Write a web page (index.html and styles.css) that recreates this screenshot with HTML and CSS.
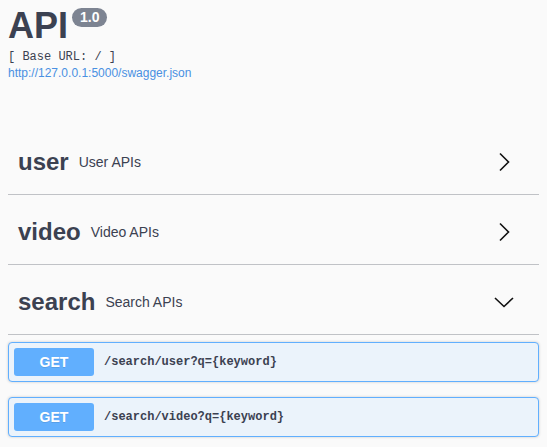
FILE: index.html
```html
<!DOCTYPE html>
<html>
<head>
<meta charset="utf-8">
<link rel="stylesheet" href="styles.css">
</head>
<body>
<div class="wrap">
  <div class="info">
    <h2 class="title">API <span class="version">1.0</span></h2>
    <div class="base-url">[ Base URL: / ]</div>
    <a class="spec-link" href="#">http://127.0.0.1:5000/swagger.json</a>
  </div>

  <div class="tags">
    <div class="tag">
      <span class="tag-name">user</span>
      <span class="tag-desc">User APIs</span>
      <svg class="chev" width="20" height="20" viewBox="0 0 20 20"><polyline points="6,1.5 14.5,10 6,18.5" fill="none" stroke="#111" stroke-width="1.6"/></svg>
    </div>
    <div class="tag">
      <span class="tag-name">video</span>
      <span class="tag-desc">Video APIs</span>
      <svg class="chev" width="20" height="20" viewBox="0 0 20 20"><polyline points="6,1.5 14.5,10 6,18.5" fill="none" stroke="#111" stroke-width="1.6"/></svg>
    </div>
    <div class="tag">
      <span class="tag-name">search</span>
      <span class="tag-desc">Search APIs</span>
      <svg class="chev" width="20" height="20" viewBox="0 0 20 20"><polyline points="1,6 10,14.5 19,6" fill="none" stroke="#111" stroke-width="1.6"/></svg>
    </div>

    <div class="ops">
      <div class="op">
        <span class="method">GET</span>
        <span class="path">/search/user?q={keyword}</span>
      </div>
      <div class="op">
        <span class="method">GET</span>
        <span class="path">/search/video?q={keyword}</span>
      </div>
    </div>
  </div>
</div>
</body>
</html>
```

FILE: styles.css
```css
html, body {
  margin: 0;
  padding: 0;
  background: #fafafa;
}
body {
  font-family: "Liberation Sans", Arial, sans-serif;
  color: #3b4151;
}
.wrap {
  padding: 0 8px;
}
.title {
  display: flex;
  align-items: flex-start;
  margin: 0;
  padding-top: 8px;
  font-size: 36px;
  line-height: 36px;
  font-weight: 700;
  color: #3b4151;
}
.version {
  display: inline-block;
  margin-left: 4px;
  margin-top: 0;
  padding: 2px 8px;
  height: 15px;
  line-height: 15px;
  font-size: 14px;
  font-weight: 700;
  color: #fff;
  background: #7d8492;
  border-radius: 57px;
}
.base-url {
  margin-top: 5px;
  font-family: "Liberation Mono", "Courier New", monospace;
  font-size: 12px;
  line-height: 16px;
  color: #3b4151;
}
.spec-link {
  display: block;
  margin-top: 0;
  font-size: 12px;
  line-height: 16px;
  color: #4990e2;
  text-decoration: none;
}
.tags {
  margin-top: 49px;
}
.tag {
  display: flex;
  align-items: center;
  height: 64px;
  padding: 0 25px 0 10px;
  margin-bottom: 5px;
  border-bottom: 1px solid rgba(59, 65, 81, 0.3);
}
.tag-name {
  font-size: 24px;
  font-weight: 700;
  color: #3b4151;
}
.tag-desc {
  flex: 1;
  padding-left: 10px;
  font-size: 14px;
  color: #3b4151;
}
.chev {
  display: block;
}
.ops {
  padding-top: 2px;
}
.op {
  display: flex;
  align-items: center;
  padding: 5px;
  margin-bottom: 15px;
  border: 1px solid #61affe;
  border-radius: 4px;
  background: #ebf3fb;
  box-shadow: 0 0 3px rgba(0, 0, 0, 0.19);
}
.method {
  min-width: 80px;
  padding: 6px 0;
  text-align: center;
  font-size: 14px;
  line-height: 16px;
  font-weight: 700;
  color: #fff;
  background: #61affe;
  border-radius: 3px;
  text-shadow: 0 1px 0 rgba(0, 0, 0, 0.1);
}
.path {
  padding: 0 10px;
  font-family: "Liberation Mono", "Courier New", monospace;
  font-size: 12px;
  font-weight: 700;
  color: #3b4151;
}
```
